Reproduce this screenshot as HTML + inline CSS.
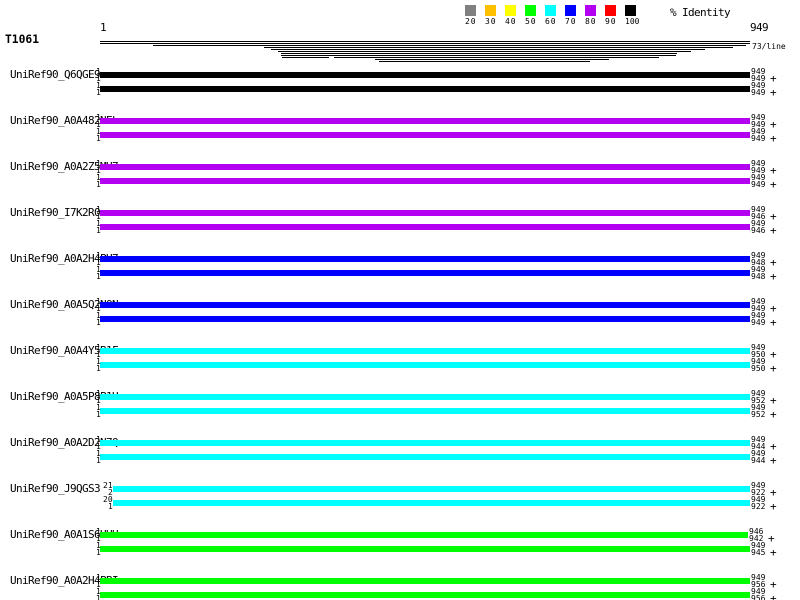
<!DOCTYPE html>
<html>
<head>
<meta charset="utf-8">
<title>T1061</title>
<style>
html,body{margin:0;padding:0;background:#fff;width:800px;height:600px;overflow:hidden}
body{position:relative;font-family:"DejaVu Sans Mono","Liberation Mono",monospace;color:#000}
div{position:absolute;white-space:pre}
.t{font-size:11px;line-height:12px;letter-spacing:-.62px}
.s{font-size:8px;line-height:8px}
.l{height:1px;background:#000}
.k{top:5px;width:11px;height:11px}
.x{top:18px;font-size:8px;line-height:8px}
.g{left:0;width:800px;height:30px}
.lb{left:10px;top:-3px;font-size:11px;line-height:12px;letter-spacing:-.62px}
.b{left:100px;width:650px;height:6px}
.b2{top:14px}
.o{left:96px;font-size:8px;line-height:8px}
.r{left:751px;font-size:8px;line-height:8px}
.p{left:770px;font-size:11px;line-height:8px;letter-spacing:-.6px}
.a{top:-4px}.c{top:3px}.d{top:10px}.e{top:17px}
</style>
</head>
<body>
<div class="k" style="left:465px;background:#808080"></div><div class="x" style="left:465px;letter-spacing:.9px">20</div>
<div class="k" style="left:485px;background:#ffc000"></div><div class="x" style="left:485px;letter-spacing:.9px">30</div>
<div class="k" style="left:505px;background:#ffff00"></div><div class="x" style="left:505px;letter-spacing:.9px">40</div>
<div class="k" style="left:525px;background:#00ff00"></div><div class="x" style="left:525px;letter-spacing:.9px">50</div>
<div class="k" style="left:545px;background:#00ffff"></div><div class="x" style="left:545px;letter-spacing:.9px">60</div>
<div class="k" style="left:565px;background:#0000ff"></div><div class="x" style="left:565px;letter-spacing:.9px">70</div>
<div class="k" style="left:585px;background:#b400f0"></div><div class="x" style="left:585px;letter-spacing:.9px">80</div>
<div class="k" style="left:605px;background:#ff0000"></div><div class="x" style="left:605px;letter-spacing:.9px">90</div>
<div class="k" style="left:625px;background:#000"></div><div class="x" style="left:625px">100</div>
<div class="t" style="left:670px;top:7px">% Identity</div>
<div class="t" style="left:100px;top:22px">1</div>
<div class="t" style="left:750px;top:22px">949</div>
<div style="left:5px;top:33px;font-size:11.3px;line-height:13px;font-weight:bold">T1061</div>
<div class="s" style="left:752px;top:43px">73/line</div>

<div class="l" style="left:100px;top:41px;width:650px"></div>
<div class="l" style="left:100px;top:43px;width:650px"></div>
<div class="l" style="left:153px;top:45px;width:593px"></div>
<div class="l" style="left:264px;top:47px;width:469px"></div>
<div class="l" style="left:271px;top:49px;width:434px"></div>
<div class="l" style="left:278px;top:51px;width:413px"></div>
<div class="l" style="left:281px;top:53px;width:396px"></div>
<div class="l" style="left:281px;top:55px;width:395px"></div>
<div class="l" style="left:282px;top:57px;width:47px"></div>
<div class="l" style="left:334px;top:57px;width:325px"></div>
<div class="l" style="left:375px;top:59px;width:234px"></div>
<div class="l" style="left:379px;top:61px;width:211px"></div>

<div class="g" style="top:72px"><div class="lb">UniRef90_Q6QGE9</div><div class="b" style="background:#000"></div><div class="b b2" style="background:#000"></div><div class="o a">1</div><div class="o c">1</div><div class="o d">1</div><div class="o e">1</div><div class="r a">949</div><div class="r c">949</div><div class="p c">+</div><div class="r d">949</div><div class="r e">949</div><div class="p e">+</div></div>

<div class="g" style="top:118px"><div class="lb">UniRef90_A0A482NEL</div><div class="b" style="background:#b400f0"></div><div class="b b2" style="background:#b400f0"></div><div class="o a">1</div><div class="o c">1</div><div class="o d">1</div><div class="o e">1</div><div class="r a">949</div><div class="r c">949</div><div class="p c">+</div><div class="r d">949</div><div class="r e">949</div><div class="p e">+</div></div>

<div class="g" style="top:164px"><div class="lb">UniRef90_A0A2Z5MH7</div><div class="b" style="background:#b400f0"></div><div class="b b2" style="background:#b400f0"></div><div class="o a">1</div><div class="o c">1</div><div class="o d">1</div><div class="o e">1</div><div class="r a">949</div><div class="r c">949</div><div class="p c">+</div><div class="r d">949</div><div class="r e">949</div><div class="p e">+</div></div>

<div class="g" style="top:210px"><div class="lb">UniRef90_I7K2R0</div><div class="b" style="background:#b400f0"></div><div class="b b2" style="background:#b400f0"></div><div class="o a">1</div><div class="o c">1</div><div class="o d">1</div><div class="o e">1</div><div class="r a">949</div><div class="r c">946</div><div class="p c">+</div><div class="r d">949</div><div class="r e">946</div><div class="p e">+</div></div>

<div class="g" style="top:256px"><div class="lb">UniRef90_A0A2H4PH7</div><div class="b" style="background:#0000ff"></div><div class="b b2" style="background:#0000ff"></div><div class="o a">1</div><div class="o c">1</div><div class="o d">1</div><div class="o e">1</div><div class="r a">949</div><div class="r c">948</div><div class="p c">+</div><div class="r d">949</div><div class="r e">948</div><div class="p e">+</div></div>

<div class="g" style="top:302px"><div class="lb">UniRef90_A0A5Q2NON</div><div class="b" style="background:#0000ff"></div><div class="b b2" style="background:#0000ff"></div><div class="o a">1</div><div class="o c">1</div><div class="o d">1</div><div class="o e">1</div><div class="r a">949</div><div class="r c">949</div><div class="p c">+</div><div class="r d">949</div><div class="r e">949</div><div class="p e">+</div></div>

<div class="g" style="top:348px"><div class="lb">UniRef90_A0A4Y5B1F</div><div class="b" style="background:#00ffff"></div><div class="b b2" style="background:#00ffff"></div><div class="o a">1</div><div class="o c">1</div><div class="o d">1</div><div class="o e">1</div><div class="r a">949</div><div class="r c">950</div><div class="p c">+</div><div class="r d">949</div><div class="r e">950</div><div class="p e">+</div></div>

<div class="g" style="top:394px"><div class="lb">UniRef90_A0A5P8P1H</div><div class="b" style="background:#00ffff"></div><div class="b b2" style="background:#00ffff"></div><div class="o a">1</div><div class="o c">1</div><div class="o d">1</div><div class="o e">1</div><div class="r a">949</div><div class="r c">952</div><div class="p c">+</div><div class="r d">949</div><div class="r e">952</div><div class="p e">+</div></div>

<div class="g" style="top:440px"><div class="lb">UniRef90_A0A2D2N7Q</div><div class="b" style="background:#00ffff"></div><div class="b b2" style="background:#00ffff"></div><div class="o a">1</div><div class="o c">1</div><div class="o d">1</div><div class="o e">1</div><div class="r a">949</div><div class="r c">944</div><div class="p c">+</div><div class="r d">949</div><div class="r e">944</div><div class="p e">+</div></div>

<div class="g" style="top:486px"><div class="lb">UniRef90_J9QGS3</div><div class="b" style="left:113px;width:637px;background:#00ffff"></div><div class="b b2" style="left:113px;width:637px;background:#00ffff"></div><div class="o a" style="left:103px">21</div><div class="o c" style="left:108px">2</div><div class="o d" style="left:103px">20</div><div class="o e" style="left:108px">1</div><div class="r a">949</div><div class="r c">922</div><div class="p c">+</div><div class="r d">949</div><div class="r e">922</div><div class="p e">+</div></div>

<div class="g" style="top:532px"><div class="lb">UniRef90_A0A1S6HHH</div><div class="b" style="width:648px;background:#00ff00"></div><div class="b b2" style="background:#00ff00"></div><div class="o a">1</div><div class="o c">1</div><div class="o d">1</div><div class="o e">1</div><div class="r a" style="left:749px">946</div><div class="r c" style="left:749px">942</div><div class="p c" style="left:768px">+</div><div class="r d">949</div><div class="r e">945</div><div class="p e">+</div></div>

<div class="g" style="top:578px"><div class="lb">UniRef90_A0A2H4PBI</div><div class="b" style="background:#00ff00"></div><div class="b b2" style="background:#00ff00"></div><div class="o a">1</div><div class="o c">1</div><div class="o d">1</div><div class="o e">1</div><div class="r a">949</div><div class="r c">956</div><div class="p c">+</div><div class="r d">949</div><div class="r e">956</div><div class="p e">+</div></div>
</body>
</html>
